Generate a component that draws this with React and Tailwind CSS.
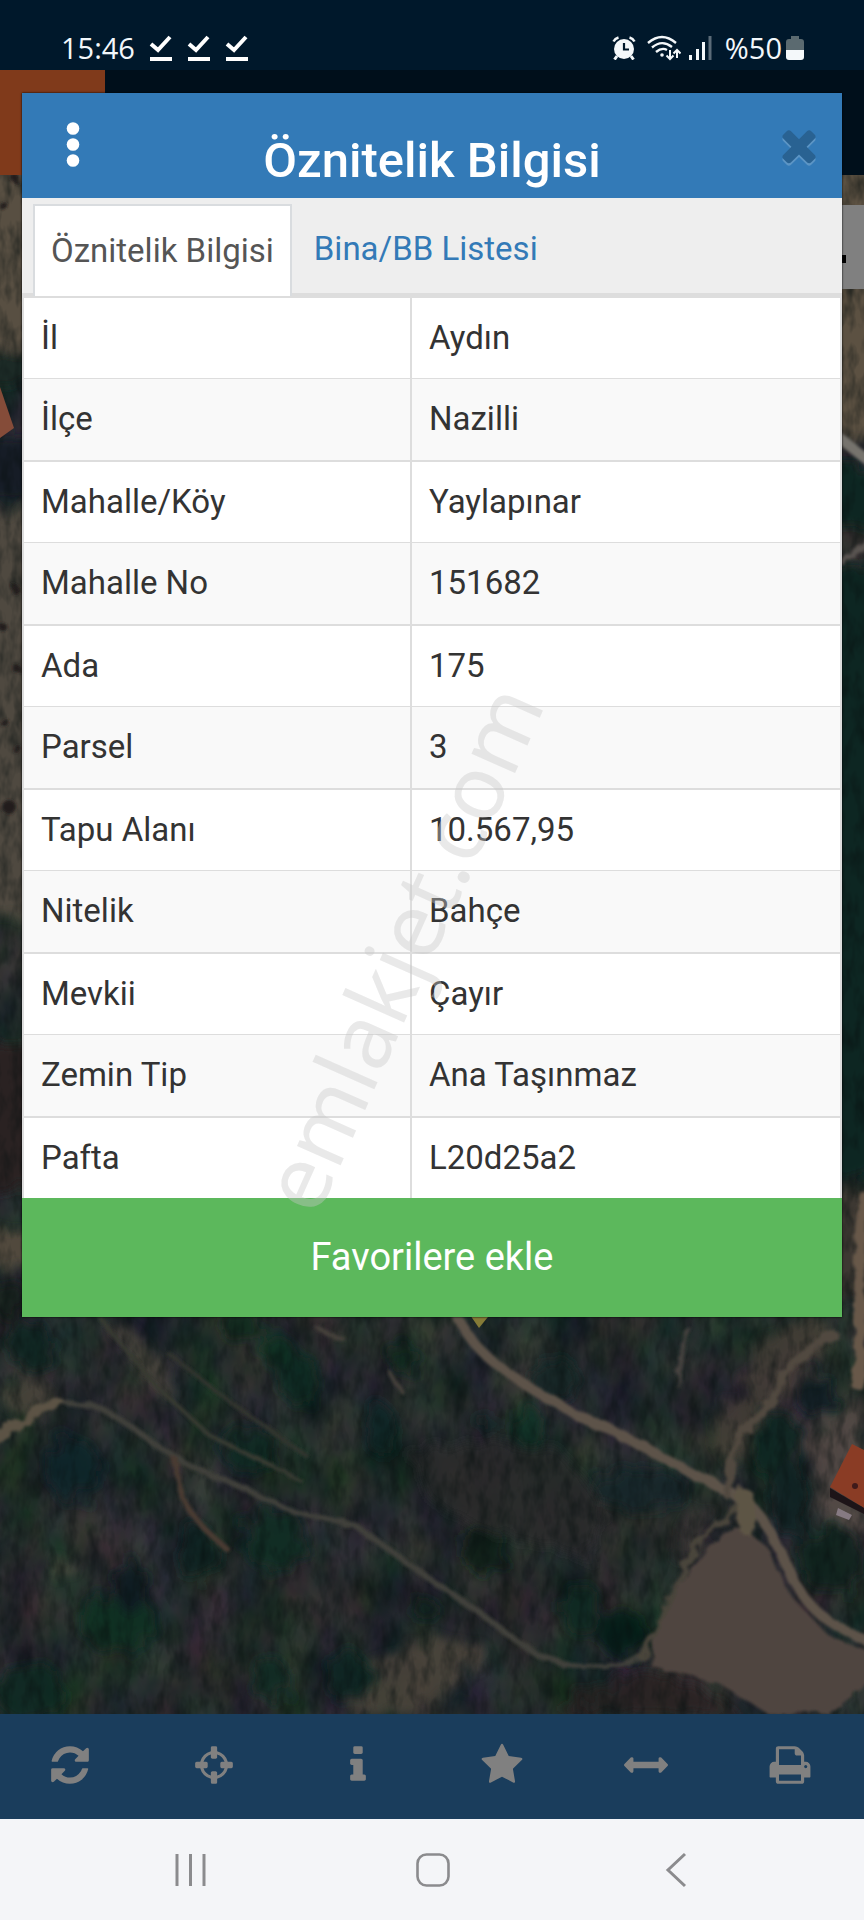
import React from "react";

const ROWS = [
  ["İl", "Aydın"],
  ["İlçe", "Nazilli"],
  ["Mahalle/Köy", "Yaylapınar"],
  ["Mahalle No", "151682"],
  ["Ada", "175"],
  ["Parsel", "3"],
  ["Tapu Alanı", "10.567,95"],
  ["Nitelik", "Bahçe"],
  ["Mevkii", "Çayır"],
  ["Zemin Tip", "Ana Taşınmaz"],
  ["Pafta", "L20d25a2"],
];

const TOOLS = [
  {
    label: "Yenile",
    d: "M1639 1056q0 5-1 7-64 268-268 434.5t-478 166.5q-146 0-282.500-55t-243.500-157l-129 129q-19 19-45 19t-45-19-19-45v-448q0-26 19-45t45-19h448q26 0 45 19t19 45-19 45l-137 137q71 66 161 102t187 36q134 0 250-65t186-179q11-17 53-117 8-23 30-23h192q13 0 22.500 9.500t9.500 22.500zm25-800v448q0 26-19 45t-45 19h-448q-26 0-45-19t-19-45 19-45l138-138q-148-137-349-137-134 0-250 65t-186 179q-11 17-53 117-8 23-30 23h-199q-13 0-22.500-9.500t-9.500-22.500v-7q65-268 270-434.500t480-166.500q146 0 284 55.500t245 156.500l130-129q19-19 45-19t45 19 19 45z",
  },
  {
    label: "Konum",
    d: "M1325 1024h-109q-26 0-45-19t-19-45v-128q0-26 19-45t45-19h109q-32-108-112.5-188.500t-188.500-112.500v109q0 26-19 45t-45 19h-128q-26 0-45-19t-19-45v-109q-108 32-188.500 112.500t-112.500 188.500h109q26 0 45 19t19 45v128q0 26-19 45t-45 19h-109q32 108 112.500 188.500t188.500 112.500v-109q0-26 19-45t45-19h128q26 0 45 19t19 45v109q108-32 188.500-112.500t112.500-188.500zm339-192v128q0 26-19 45t-45 19h-143q-37 161-154.500 278.500t-278.500 154.500v143q0 26-19 45t-45 19h-128q-26 0-45-19t-19-45v-143q-161-37-278.500-154.500t-154.500-278.500h-143q-26 0-45-19t-19-45v-128q0-26 19-45t45-19h143q37-161 154.500-278.500t278.500-154.500v-143q0-26 19-45t45-19h128q26 0 45 19t19 45v143q161 37 278.500 154.500t154.500 278.500h143q26 0 45 19t19 45z",
  },
  {
    label: "Bilgi",
    d: "M1216 1344v128q0 26-19 45t-45 19h-512q-26 0-45-19t-19-45v-128q0-26 19-45t45-19h64v-384h-64q-26 0-45-19t-19-45v-128q0-26 19-45t45-19h384q26 0 45 19t19 45v576h64q26 0 45 19t19 45zm-128-1152v192q0 26-19 45t-45 19h-256q-26 0-45-19t-19-45v-192q0-26 19-45t45-19h256q26 0 45 19t19 45z",
  },
  {
    label: "Favoriler",
    d: "M1728 647q0 22-26 48l-363 354 86 500q1 7 1 20 0 21-10.500 35.500t-30.500 14.500q-19 0-40-12l-449-236-449 236q-22 12-40 12-21 0-31.500-14.500t-10.500-35.500q0-6 2-20l86-500-364-354q-25-27-25-48 0-37 56-46l502-73 225-455q19-41 49-41t49 41l225 455 502 73q56 9 56 46z",
  },
  {
    label: "Ölçüm",
    d: "M1792 896q0 26-19 45l-256 256q-19 19-45 19t-45-19-19-45v-128h-1024v128q0 26-19 45t-45 19-45-19l-256-256q-19-19-19-45t19-45l256-256q19-19 45-19t45 19 19 45v128h1024v-128q0-26 19-45t45-19 45 19l256 256q19 19 19 45z",
  },
  {
    label: "Yazdır",
    d: "M448 1536h896v-256h-896v256zm0-640h896v-384h-160q-40 0-68-28t-28-68v-160h-640v640zm1152 64q0-26-19-45t-45-19-45 19-19 45 19 45 45 19 45-19 19-45zm128 0v416q0 13-9.500 22.500t-22.500 9.500h-224v160q0 40-28 68t-68 28h-960q-40 0-68-28t-28-68v-160h-224q-13 0-22.500-9.500t-9.500-22.500v-416q0-79 56.500-135.500t135.500-56.500h64v-544q0-40 28-68t68-28h672q40 0 88 20t76 48l152 152q28 28 48 76t20 88v256h64q79 0 135.500 56.500t56.500 135.500z",
  },
];

const TIMES =
  "M1490 1322q0 40-28 68l-136 136q-28 28-68 28t-68-28l-294-294-294 294q-28 28-68 28t-68-28l-136-136q-28-28-28-68t28-68l294-294-294-294q-28-28-28-68t28-68l136-136q28-28 68-28t68 28l294 294 294-294q28-28 68-28t68 28l136 136q28 28 28 68t-28 68l-294 294 294 294q28 28 28 68z";

// Tree crowns on the map: [cx, cy, rx, ry, colour]
const TREES = [
  [278, 1352, 18, 16, "#0d3320"],
  [300, 1380, 20, 26, "#0f2c22"],
  [403, 1358, 14, 16, "#0c2b1d"],
  [380, 1430, 16, 26, "#0c2725"],
  [528, 1425, 16, 20, "#0c3026"],
  [488, 1424, 9, 12, "#0a2420"],
  [555, 1380, 26, 22, "#122825"],
  [250, 1450, 26, 24, "#0e2c22"],
  [72, 1470, 26, 34, "#0f252c"],
  [195, 1552, 20, 30, "#0a2420"],
  [275, 1540, 32, 32, "#0c2e24"],
  [484, 1550, 24, 22, "#091f18"],
  [580, 1608, 20, 26, "#0a2a20"],
  [622, 1633, 24, 26, "#061a16"],
  [118, 1622, 38, 30, "#0d3022"],
  [130, 1585, 14, 30, "#0a1c20"],
  [30, 1690, 34, 30, "#0c2c20"],
  [350, 1680, 24, 26, "#0d2822"],
  [270, 1680, 20, 22, "#102c24"],
  [425, 1610, 14, 12, "#0c241e"],
  [775, 1445, 28, 34, "#0a2822"],
  [815, 1392, 20, 24, "#0a1c22"],
  [640, 1490, 50, 22, "#14282a"],
  [240, 1325, 24, 12, "#0e2b1e"],
  [832, 1560, 32, 34, "#0a211e"],
  [790, 1500, 18, 40, "#0b2320"],
  [30, 1345, 24, 26, "#0f2620"],
  [10, 1300, 18, 18, "#13241f"],
];

const MAIN_ROAD =
  "M455 1312 C470 1345 490 1365 551 1400 C580 1418 610 1430 622 1435 C660 1456 690 1472 744 1500 C765 1515 768 1530 780 1550 C795 1590 815 1615 837 1626 L870 1643";
const LEFT_ROAD =
  "M-5 1437 C30 1420 35 1404 60 1403 C95 1402 115 1415 143 1435 C175 1462 210 1475 248 1490 C285 1514 330 1518 358 1528 C400 1556 430 1582 468 1604 C505 1630 535 1665 584 1667 C610 1666 630 1664 642 1657";

function MapImage() {
  return (
    <svg
      className="absolute inset-0 size-full"
      viewBox="0 175 864 1539"
      preserveAspectRatio="xMidYMid slice"
      aria-hidden="true"
    >
      <defs>
        <filter id="ground" x="0" y="0" width="100%" height="100%" colorInterpolationFilters="sRGB">
          <feTurbulence type="fractalNoise" baseFrequency="0.022 0.014" numOctaves="4" seed="11" />
          <feColorMatrix values="0.22 0 0 0 0.035  0.1 0.14 0 0 0.05  0.12 0 0.08 0 0.07  0 0 0 0 1" />
        </filter>
        <filter id="grain" x="0" y="0" width="100%" height="100%" colorInterpolationFilters="sRGB">
          <feTurbulence type="fractalNoise" baseFrequency="0.09 0.04" numOctaves="3" seed="4" />
          <feColorMatrix values="0 0 0 0 0.03  0 0 0 0 0.06  0 0 0 0 0.06  1.1 0 0 0 -0.44" />
        </filter>
        <filter id="rough" x="-20%" y="-20%" width="140%" height="140%">
          <feTurbulence type="fractalNoise" baseFrequency="0.06" numOctaves="3" seed="7" />
          <feDisplacementMap in="SourceGraphic" scale="12" />
          <feGaussianBlur stdDeviation="1.5" />
        </filter>
        <filter id="crown" x="-60%" y="-60%" width="220%" height="220%">
          <feTurbulence type="fractalNoise" baseFrequency="0.07" numOctaves="3" seed="2" />
          <feDisplacementMap in="SourceGraphic" scale="34" />
          <feGaussianBlur stdDeviation="5" />
        </filter>
      </defs>
      <rect x="0" y="175" width="864" height="1539" filter="url(#ground)" />

      <g filter="url(#crown)">
        <path d="M-20 165H40V350H-20z" fill="#585042" />
        <path d="M-20 350H40V385H-20z" fill="#1b2926" />
        <path d="M-20 435H40V500H-20z" fill="#141d27" />
        <path d="M-20 508H40V915H-20z" fill="#50483f" />
        <path d="M-20 1045H40V1190H-20z" fill="#2a2224" />
        <path d="M-20 1220L40 1240V1275L-20 1260z" fill="#51483d" />
        <path d="M825 165H890V440H825z" fill="#5c5143" />
        <path d="M825 465H890V525H825zM825 565H890V1175H825z" fill="#0e2721" />
        <path d="M825 1190H890V1300H825z" fill="#3e3730" />
      </g>
      <g filter="url(#crown)" opacity="0.85">
        {TREES.map(([cx, cy, rx, ry, fill]) => (
          <ellipse key={`${cx}-${cy}`} cx={cx} cy={cy} rx={rx} ry={ry} fill={fill} />
        ))}
      </g>
      <g filter="url(#crown)" opacity="0.8">
        <path d="M385 1655L440 1635L488 1650L460 1680L420 1714H345L370 1690z" fill="#4f463c" />
        <path d="M755 1350L800 1310L835 1325L820 1360L770 1410L735 1470L710 1440L722 1400L745 1395z" fill="#473f38" />
        <path d="M690 1510L715 1505L700 1560L670 1560z" fill="#3b3735" />
        <path d="M560 1714L600 1685L650 1672L700 1690L740 1714z" fill="#2a2223" />
        <path d="M30 1375L50 1380L55 1405L20 1415L0 1400z" fill="#4a453a" />
        <path d="M105 1325L130 1325L170 1375L165 1400L150 1385z" fill="#4b473c" />
        <path d="M410 1450L500 1440L560 1450L600 1500L590 1560L480 1530L430 1500z" fill="#2a292c" />
        <path d="M805 1430L864 1400V1530L820 1520z" fill="#5a4d48" />
        <path d="M48 1555L72 1562L75 1575L55 1580z" fill="#5c5847" />
      </g>
      <rect x="0" y="175" width="864" height="1539" filter="url(#grain)" />

      <g filter="url(#rough)" fill="none" strokeLinecap="round">
        <path
          d="M740 1525L768 1548L790 1595L828 1635L870 1652V1683L828 1714H768L716 1682L653 1668L655 1635L684 1575L725 1530z"
          fill="#504540"
        />
        <path d={LEFT_ROAD} stroke="#41403a" strokeWidth="6" />
        <path d="M-5 1437C30 1420 35 1404 60 1403" stroke="#5c5344" strokeWidth="9" />
        <path d="M642 1657C665 1620 670 1590 688 1560C705 1530 725 1520 735 1505" stroke="#4a443b" strokeWidth="6" />
        <path d={MAIN_ROAD} stroke="#5d5349" strokeWidth="10" />
        <path d="M728 1495C730 1450 735 1440 765 1410C785 1375 795 1350 834 1335" stroke="#51483f" strokeWidth="9" />
        <path d="M744 1498L748 1525" stroke="#5d5445" strokeWidth="20" />
        <path d="M176 1460C175 1490 185 1515 226 1548" stroke="#483a33" strokeWidth="6" />
        <path d="M100 1318L155 1385L209 1435L300 1480" stroke="#383a32" strokeWidth="4" />
        <path d="M170 1355L237 1407L308 1457" stroke="#30342d" strokeWidth="4" />
        <path d="M864 1200C852 1260 866 1320 858 1385" stroke="#67584a" strokeWidth="12" />
        <path d="M690 1330C678 1355 682 1370 678 1385" stroke="#474340" strokeWidth="4" />
        <path d="M392 1375L400 1390M320 1330L345 1340" stroke="#45413a" strokeWidth="4" />
        <path d="M842 440L870 462" stroke="#76736d" strokeWidth="10" />
        <path d="M842 560L870 545" stroke="#5a5451" strokeWidth="6" />
      </g>
      <path d="M0 387L14 428L0 438z" fill="#854c39" />
      <path d="M852 1444L864 1450V1508L830 1487z" fill="#8a3c25" />
      <path d="M830 1488L864 1508V1514L830 1497z" fill="#1d1418" />
      <path d="M838 1508L852 1515L849 1520L836 1515z" fill="#867a82" />
      <circle cx="855" cy="1486" r="3" fill="#3f1a1a" />
      <path d="M468 1312L479 1328L492 1312z" fill="#857b37" />
      <g fill="#211d1a" filter="url(#rough)">
        <circle cx="17" cy="180" r="4" />
        <circle cx="2" cy="205" r="4" />
        <circle cx="14" cy="588" r="4" />
        <circle cx="4" cy="628" r="4" />
        <circle cx="16" cy="668" r="4" />
        <circle cx="6" cy="724" r="4" />
        <circle cx="9" cy="807" r="7" />
        <circle cx="18" cy="750" r="4" />
      </g>
    </svg>
  );
}

function UpdateDone() {
  return (
    <svg className="h-7 w-6" viewBox="0 0 24 28" fill="none" aria-hidden="true">
      <path d="M2 10L9 16L21 3" stroke="#fff" strokeWidth="4" />
      <path d="M1 25H23" stroke="#fff" strokeWidth="4" />
    </svg>
  );
}

function StatusBar() {
  return (
    <header className="flex h-[70px] items-center justify-between bg-[#00182b] pt-[26px] pr-[60px] pl-[61px] font-['Open_Sans',sans-serif] text-[29px] leading-8 text-[#f2f7fb]">
      <div className="flex items-center gap-[14px]">
        <span>15:46</span>
        <UpdateDone />
        <UpdateDone />
        <UpdateDone />
      </div>
      <div className="flex items-center">
        <svg className="mr-[11px] size-6" viewBox="0 0 24 24" fill="none" stroke="#f4f8fa" aria-hidden="true">
          <circle cx="12" cy="13" r="10" fill="#f4f8fa" stroke="none" />
          <path d="M1.500 5.500Q3 2.500 6.500 1.500M22.500 5.500Q21 2.500 17.500 1.500" strokeWidth="2.500" />
          <path d="M5 20L2.500 23.500M19 20L21.500 23.500" strokeWidth="3" />
          <path d="M12 7V13.500H17" stroke="#00182b" strokeWidth="2.200" />
        </svg>
        <svg className="mr-2 h-[26px] w-[34px]" viewBox="0 0 34 26" fill="none" stroke="#f4f8fa" strokeWidth="2.400" aria-hidden="true">
          <path d="M1 8Q15-4 29 8" />
          <path d="M5 12.500Q15 4 25 12" />
          <path d="M9 17Q15 12 20 15" />
          <circle cx="15" cy="20" r="1.800" fill="#f4f8fa" stroke="none" />
          <path d="M23 15V24M19.500 20.500L23 24L26.500 20.500" strokeWidth="2" />
          <path d="M30 23V15M26.500 18.500L30 15L33.500 18.500" strokeWidth="2" />
        </svg>
        <svg className="mr-3 h-6 w-6" viewBox="0 0 24 24" aria-hidden="true">
          <path d="M0 19h3v5H0zM7 13h3v11H7zM13 6h3v18h-3z" fill="#f4f8fa" />
          <path d="M19.500 0h3v24h-3z" fill="#5b6b78" />
        </svg>
        <span>%50</span>
        <svg className="ml-1 h-6 w-[18px]" viewBox="0 0 18 24" aria-hidden="true">
          <path d="M5 0h8v3h2q3 0 3 3v8H0V6q0-3 3-3h2z" fill="#5b6a70" />
          <path d="M0 14h18v7q0 3-3 3H3q-3 0-3-3z" fill="#f4f8fa" />
        </svg>
      </div>
    </header>
  );
}

function InfoDialog() {
  return (
    <section
      role="dialog"
      aria-labelledby="dialog-title"
      className="absolute inset-x-[22px] top-[93px] bg-white shadow-[0_0_2px_#000000]"
    >
      <div className="grid h-[105px] grid-cols-[102px_1fr_102px] bg-[#337ab7]">
        <button type="button" aria-label="Menü" className="flex items-center justify-center pb-1">
          <svg className="h-12 w-4" viewBox="0 0 16 48" fill="#fff" aria-hidden="true">
            <circle cx="8" cy="7.500" r="6.300" />
            <circle cx="8" cy="23.500" r="6.300" />
            <circle cx="8" cy="39.500" r="6.300" />
          </svg>
        </button>
        <h1 id="dialog-title" className="pt-7 text-center text-[49px] leading-[80px] font-medium whitespace-nowrap text-white">
          Öznitelik Bilgisi
        </h1>
        <button type="button" aria-label="Kapat" className="flex items-center justify-end pr-[18px] pb-1">
          <svg className="size-[50px]" viewBox="0 0 1792 1792" aria-hidden="true">
            <path d={TIMES} fill="#5c95c5" transform="translate(0 90)" />
            <path d={TIMES} fill="#296292" />
          </svg>
        </button>
      </div>

      <div role="tablist" className="flex h-[98px] border-b-[3px] border-[#ddd] bg-[#eeeeee] pt-[6px] pl-[11px] text-[33px]">
        <button
          type="button"
          role="tab"
          aria-selected="true"
          className="-mb-[3px] border-2 border-b-0 border-[#d9dcdf] bg-white px-4 pb-px text-[#555]"
        >
          Öznitelik Bilgisi
        </button>
        <button type="button" role="tab" aria-selected="false" className="px-[22px] text-[#337ab7]">
          Bina/BB Listesi
        </button>
      </div>

      <table className="w-full table-fixed border-separate border-spacing-0 border-x-2 border-[#ddd] text-left text-[33px] leading-[44px] text-[#333]">
        <colgroup>
          <col className="w-[388px]" />
          <col />
        </colgroup>
        <tbody>
          {ROWS.map(([name, value]) => (
            <tr key={name} className="group h-[82px] even:bg-[#f9f9f9]">
              <th scope="row" className="border-t border-r-2 border-[#ddd] pb-px pl-[17px] font-normal group-odd:border-t-2">
                {name}
              </th>
              <td className="border-t border-[#ddd] pb-px pl-[17px] group-odd:border-t-2">{value}</td>
            </tr>
          ))}
        </tbody>
      </table>

      <button type="button" className="h-[119px] w-full bg-[#5cb85c] text-[38px] text-white">
        Favorilere ekle
      </button>
    </section>
  );
}

export default function App() {
  return (
    <div className="relative flex min-h-screen flex-col overflow-hidden bg-[#20282a] font-[Roboto,sans-serif]">
      <StatusBar />
      <div className="flex h-[105px] bg-[#000f1b]">
        <div className="w-[105px] bg-[#803a1b]" />
      </div>

      <main className="relative flex flex-1 flex-col items-end pt-[30px]">
        <MapImage />
        <div className="relative flex h-[84px] w-6 items-center bg-[#808080]">
          <span className="mt-6 h-2 w-[6px] bg-black" />
        </div>
      </main>

      <nav className="grid h-[105px] grid-cols-6 bg-[#1a3d5c]">
        {TOOLS.map(({ label, d }) => (
          <button key={label} type="button" aria-label={label} className="flex items-center justify-center pr-1 pb-[3px]">
            <svg className="size-11" viewBox="0 0 1792 1792" fill="#808080" aria-hidden="true">
              <path d={d} />
            </svg>
          </button>
        ))}
      </nav>

      <footer className="flex h-[101px] items-center justify-around bg-[#f4f5f8] pr-[68px] pl-[70px]">
        <button type="button" aria-label="Son uygulamalar">
          <svg className="h-9 w-9" viewBox="0 0 36 36" fill="none" stroke="#8b8b8e" strokeWidth="3" aria-hidden="true">
            <path d="M4 2V34M17.500 2V34M31 2V34" />
          </svg>
        </button>
        <button type="button" aria-label="Ana ekran">
          <svg className="h-9 w-9" viewBox="0 0 36 36" fill="none" stroke="#8b8b8e" strokeWidth="2.600" aria-hidden="true">
            <rect x="2.500" y="2.500" width="31" height="31" rx="9" />
          </svg>
        </button>
        <button type="button" aria-label="Geri">
          <svg className="h-9 w-9" viewBox="0 0 36 36" fill="none" stroke="#8b8b8e" strokeWidth="3" aria-hidden="true">
            <path d="M28 2L11 18L28 34" />
          </svg>
        </button>
      </footer>

      <InfoDialog />

      <div className="pointer-events-none absolute top-[947px] left-[400px] -translate-x-1/2 -translate-y-1/2 rotate-[-66deg] font-['Noto_Sans',sans-serif] text-[89px] leading-none text-[#c8c8c8]/40">
        emlakjet.com
      </div>
    </div>
  );
}
